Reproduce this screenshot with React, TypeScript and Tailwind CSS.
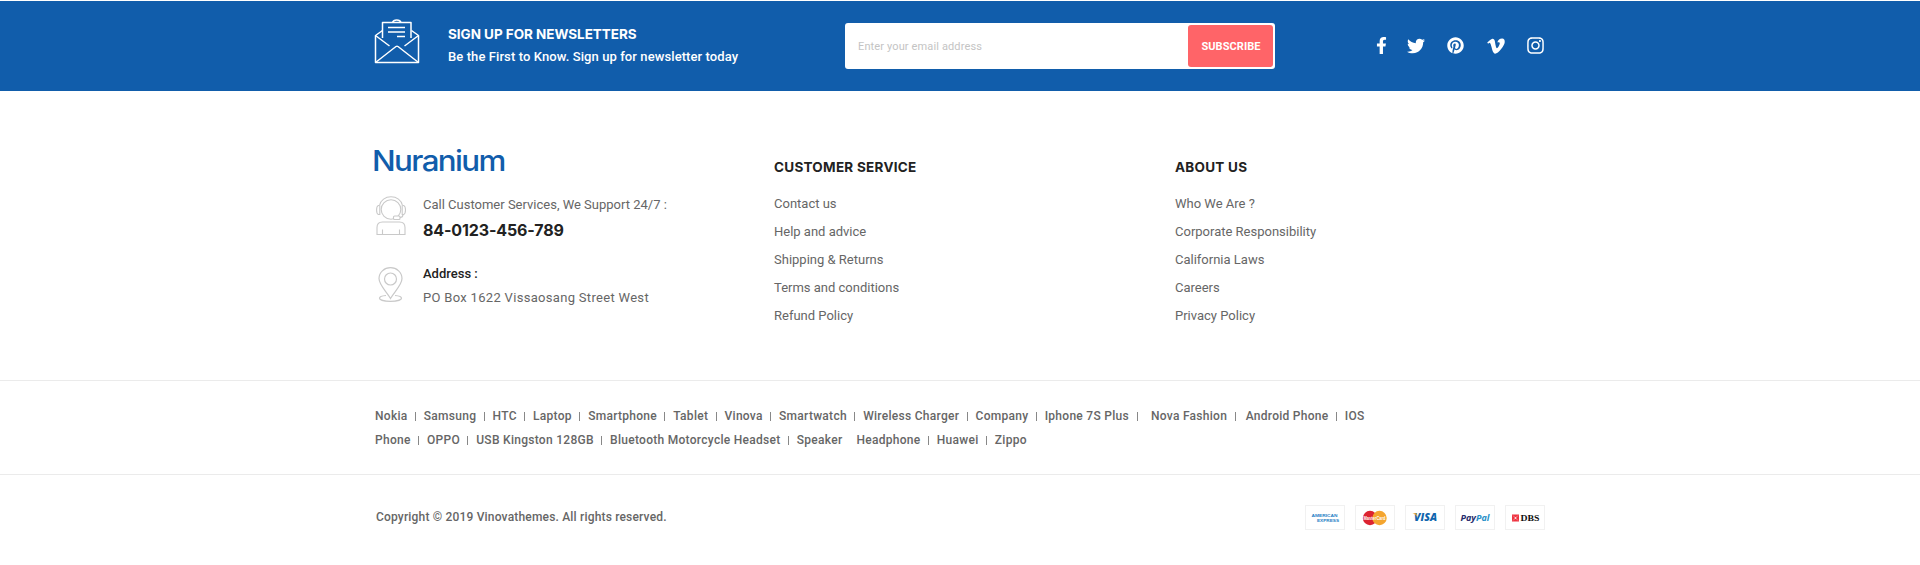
import React from "react";
import { FaFacebookF, FaTwitter, FaPinterest, FaVimeoV, FaInstagram } from "react-icons/fa";

const service = ["Contact us", "Help and advice", "Shipping & Returns", "Terms and conditions", "Refund Policy"];
const about = ["Who We Are ?", "Corporate Responsibility", "California Laws", "Careers", "Privacy Policy"];

type Tag = { label: string; sep?: string };

const tagRows: Tag[][] = [
  [
    { label: "Nokia" }, { label: "Samsung" }, { label: "HTC" }, { label: "Laptop" }, { label: "Smartphone" },
    { label: "Tablet" }, { label: "Vinova" }, { label: "Smartwatch" }, { label: "Wireless Charger" },
    { label: "Company" }, { label: "Iphone 7S Plus", sep: "ml-2 mr-[13px]" }, { label: "Nova Fashion", sep: "ml-[7.5px] mr-[10px]" },
    { label: "Android Phone" }, { label: "IOS", sep: "hidden" },
  ],
  [
    { label: "Phone" }, { label: "OPPO" }, { label: "USB Kingston 128GB" }, { label: "Bluetooth Motorcycle Headset" },
    { label: "Speaker", sep: "mr-[13px] invisible" }, { label: "Headphone" }, { label: "Huawei" }, { label: "Zippo", sep: "hidden" },
  ],
];

function MailIcon() {
  return (
    <svg width="46" height="46" viewBox="0 0 46 46" fill="none" stroke="#fff" strokeWidth="1.5" strokeLinejoin="round">
      <path d="M8.5 12.5 1.5 17.5V44.5H44.500V17.500L37.500 12.500" />
      <path d="M8.500 20V4.500H37V20M18.500 4.500C19.500 1 26 1 27 4.500" />
      <path d="M14 9.500H31M14 14H31M23 18.500H31" />
      <path d="M1.500 17.500 15.500 28M44.500 17.500 30.500 28M1.500 44.500 22 28.500Q23 27.800 24 28.500L44.500 44.500" />
    </svg>
  );
}

function AgentIcon() {
  return (
    <svg width="32" height="40" viewBox="0 0 32 40" fill="none" stroke="#c9c9c9" strokeWidth="1.1">
      <path d="M3.500 9.500C4.500 4 9.500 .8 15 .8S25.500 4 26.500 9.500" />
      <circle cx="15" cy="13.500" r="9.800" />
      <path d="M3.500 9.500H2.300C0 10.500 0 17.500 2.300 18.500H3.800V9.500M26.500 9.500H27.700C30.100 10.500 30.100 17.500 27.700 18.500H26.200V9.500M27 18.500Q27 21.500 24 21.500" />
      <rect x="17.500" y="20" width="6.500" height="3.500" rx="1" fill="#fff" />
      <path d="M1 38.500V31.500Q1 26 6.500 26H23.500Q29 26 29 31.500V38.500ZM6.500 38.500V33.500M23.500 38.500V33.500" />
    </svg>
  );
}

function PinIcon() {
  return (
    <svg width="26" height="36" viewBox="0 0 26 36" fill="none" stroke="#c9c9c9" strokeWidth="1.200">
      <path d="M12.500 31.500C9 25 1 18 1 11.500A11.500 10.800 0 0 1 24 11.500C24 18 16 25 12.500 31.500Z" />
      <circle cx="12.500" cy="12" r="6" />
      <path d="M8 28.500C4 28.800 1.500 30 1.500 31.300C1.500 33 6.500 34.300 12.500 34.300S23.500 33 23.500 31.300C23.500 30 21 28.800 17 28.500" />
    </svg>
  );
}

function Card({ children }: { children: React.ReactNode }) {
  return (
    <svg width="40" height="25" viewBox="0 0 40 25">
      <rect x=".5" y=".5" width="39" height="24" fill="#fff" stroke="#f1f1f1" />
      {children}
    </svg>
  );
}

function LinkColumn({ title, links }: { title: string; links: string[] }) {
  return (
    <section>
      <h3 className="font-[Inter] text-[13.5px] leading-5 font-bold text-[#222] whitespace-nowrap tracking-[0.27px]">{title}</h3>
      <ul className="mt-[13px] text-[13px] leading-7 text-[#666]">
        {links.map((l) => <li key={l}><a href="#">{l}</a></li>)}
      </ul>
    </section>
  );
}

export default function App() {
  return (
    <footer className="h-[565px] w-full overflow-hidden bg-white pt-px font-[Roboto,sans-serif]">
      <div className="h-[90px] bg-[#115dab]">
        <div className="mx-auto flex h-full w-[1170px] items-start text-white">
          <div className="-ml-px mt-[17px] w-[74px]"><MailIcon /></div>
          <div className="w-[397px] pt-[22px] whitespace-nowrap">
            <h2 className="font-[Inter] text-[13.5px] leading-[22px] font-bold tracking-[-0.04px]">SIGN UP FOR NEWSLETTERS</h2>
            <p className="pt-px text-[13px] leading-[22px] font-medium tracking-[0.09px]">Be the First to Know. Sign up for newsletter today</p>
          </div>
          <form className="mt-[22px] flex h-[46px] w-[430px] rounded-[3px] bg-white p-0.5">
            <input className="min-w-0 flex-1 pt-0.5 pl-[11px] text-[11px] tracking-[0.13px] outline-none placeholder:text-[#c4c4c4]" placeholder="Enter your email address" />
            <button type="button" className="w-[85px] rounded-[3px] bg-[#ff6468] pt-0.5 pl-px text-[11px] font-bold tracking-[0.08px]">SUBSCRIBE</button>
          </form>
          <div className="mt-9 ml-[101px] flex h-[17px] items-center">
            <FaFacebookF className="mr-[20px] h-[17px] w-[11px]" />
            <FaTwitter className="mr-[22px] h-[18px] w-[18px]" />
            <FaPinterest className="mr-[22px] h-[17px] w-[17px]" />
            <FaVimeoV className="mr-[20px] h-[20px] w-[20px]" />
            <FaInstagram className="h-[19px] w-[19px]" />
          </div>
        </div>
      </div>

      <div className="mx-auto flex h-[289px] w-[1170px]">
        <div className="w-[399px] pt-[50px]">
          <div className="-ml-[3px] h-10 w-max origin-left scale-x-[1.08] font-[Inter] text-[29px] leading-10 font-medium tracking-[-1.500px] text-[#115dab]">Nuranium</div>
          <div className="mt-4 flex h-[70px]">
            <div className="-mt-px w-[48px] pl-px"><AgentIcon /></div>
            <div className="whitespace-nowrap">
              <p className="mt-[-2px] text-[13px] leading-5 text-[#666]">Call Customer Services, We Support 24/7 :</p>
              <p className="mt-[3px] font-[Inter] text-base leading-6 font-bold tracking-[-0.13px] text-[#222]">84-0123-456-789</p>
            </div>
          </div>
          <div className="flex">
            <div className="w-[48px] pl-[3px]"><PinIcon /></div>
            <div className="text-[13px] leading-6 whitespace-nowrap">
              <p className="mt-[-5px] font-medium text-[#222]">Address :</p>
              <p className="tracking-[0.31px] text-[#666]">PO Box 1622 Vissaosang Street West</p>
            </div>
          </div>
        </div>
        <div className="w-[401px] pt-[66px]"><LinkColumn title="CUSTOMER SERVICE" links={service} /></div>
        <div className="pt-[66px]"><LinkColumn title="ABOUT US" links={about} /></div>
      </div>

      <div className="h-[94px] border-t border-[#ebebeb]">
        <div className="mx-auto w-[1170px] pt-[23px] text-xs leading-6 font-medium tracking-[0.28px] text-[#666]">
          {tagRows.map((row, i) => (
            <div key={i} className="flex h-6 items-center whitespace-nowrap">
              {row.map((t) => (
                <React.Fragment key={t.label}>
                  <a href="#">{t.label}</a>
                  <span className={"mt-px h-[9px] w-px shrink-0 bg-[#888] " + (t.sep ?? "ml-[7.3px] mr-2")} />
                </React.Fragment>
              ))}
            </div>
          ))}
        </div>
      </div>

      <div className="border-t border-[#ebebeb]">
        <div className="mx-auto flex w-[1170px] items-start justify-between pt-[30px]">
          <p className="pl-px text-xs leading-6 font-medium text-[#666] tracking-[0.18px]">Copyright © 2019 Vinovathemes. All rights reserved.</p>
          <div className="flex gap-2.5">
            <Card>
              <g fill="#2580c5" fontFamily="Liberation Sans" fontSize="4.200" fontWeight="700">
                <text x="6.500" y="11.500" textLength="26" lengthAdjust="spacingAndGlyphs">AMERICAN</text>
                <text x="12" y="17" textLength="22" lengthAdjust="spacingAndGlyphs">EXPRESS</text>
              </g>
            </Card>
            <Card>
              <circle cx="15" cy="13" r="7.200" fill="#dc2331" />
              <circle cx="24.500" cy="13" r="7.200" fill="#f4a52f" />
              <text x="8.500" y="15" fill="#fff" fontFamily="Liberation Sans" fontSize="5" fontWeight="700" textLength="22" lengthAdjust="spacingAndGlyphs">MasterCard</text>
            </Card>
            <Card>
              <text x="9" y="16" fill="#0f65ad" fontFamily="Open Sans" fontSize="10.500" fontStyle="italic" fontWeight="800" textLength="23" lengthAdjust="spacingAndGlyphs">VISA</text>
              <path d="M7.500 8.200H11.500L12.300 12Q10.500 9 7.500 8.200Z" fill="#eba52f" />
            </Card>
            <Card>
              <g fontFamily="Open Sans" fontSize="9" fontStyle="italic" fontWeight="700">
                <text x="5.500" y="15.500" fill="#252b6b" textLength="15.500" lengthAdjust="spacingAndGlyphs">Pay</text>
                <text x="21" y="15.500" fill="#2790c8" textLength="13.500" lengthAdjust="spacingAndGlyphs">Pal</text>
              </g>
            </Card>
            <Card>
              <rect x="7" y="9.500" width="7" height="7" fill="#ee3340" />
              <path d="m8 10.500 5 5m0-5-5 5" stroke="#fff" strokeWidth=".4" />
              <rect x="9.800" y="12.300" width="1.400" height="1.400" fill="#fff" />
              <text x="15.500" y="16" fill="#111" fontFamily="Liberation Serif" fontSize="9" fontWeight="700" textLength="19" lengthAdjust="spacingAndGlyphs">DBS</text>
            </Card>
          </div>
        </div>
      </div>
    </footer>
  );
}
